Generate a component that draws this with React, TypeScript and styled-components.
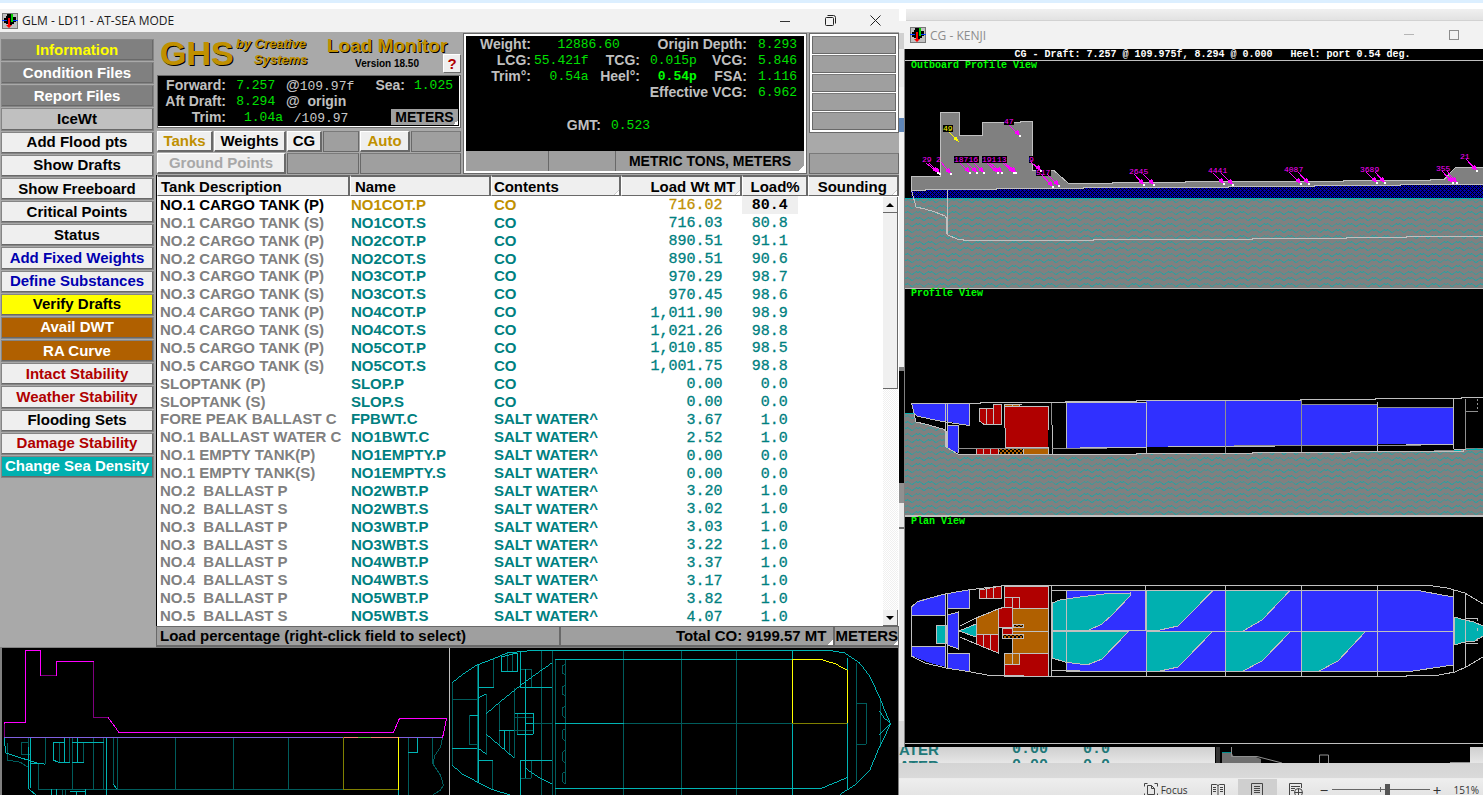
import React from "react";
import styled, { createGlobalStyle, css } from "styled-components";

const GlobalStyle = createGlobalStyle`
  *, *::before, *::after { box-sizing: border-box; }
  html, body { margin: 0; padding: 0; height: 100%; overflow: hidden; background: #fff; }
  #root { height: 100%; }
  button { font: inherit; margin: 0; padding: 0; border: 0; border-radius: 0; color: inherit; cursor: pointer; }
`;

const sans = `"Liberation Sans", Arial, sans-serif`;
const mono = `"Liberation Mono", "Courier New", monospace`;
const system = `"Open Sans", "Noto Sans", sans-serif`;

const face = "#a9a9a9";
const well = "#9f9f9f";
const dark = "#696969";
const light = "#efefef";
const gold = "#c09000";
const teal = "#008080";

/* ---------- page frame ---------- */

const Desktop = styled.div`
  height: 100vh;
  display: flex;
  flex-direction: column;
  overflow: hidden;
  border-top: 3px solid #dcefff;
  padding-top: 6px;
  background: #fff;
`;

const Windows = styled.main`
  flex: 1;
  min-height: 0;
  display: flex;
`;

const LoadWindow = styled.section`
  flex: 899 1 0;
  min-width: 0;
  display: flex;
  flex-direction: column;
  background: ${face};
  font: bold 15px ${sans};
  color: #000;
`;

const TitleBar = styled.header<{ $idle?: boolean }>`
  flex: none;
  display: flex;
  align-items: center;
  gap: 4px;
  height: ${(p) => (p.$idle ? 28 : 23)}px;
  padding: 0 ${(p) => (p.$idle ? 23 : 18)}px 0 ${(p) => (p.$idle ? 6 : 2)}px;
  background: #f2f2f2;
  color: ${(p) => (p.$idle ? "#8c8c8c" : "#1c1c1c")};
  font: 12px ${system};
  & > svg { flex: none; }
`;

const Title = styled.h1`
  margin: 0;
  font: inherit;
  white-space: nowrap;
  flex: 1;
`;

const Caption = styled.div<{ $gap: number }>`
  display: flex;
  gap: ${(p) => p.$gap}px;
`;

const CaptionButton = styled.button`
  display: flex;
  align-items: center;
  justify-content: center;
  width: 12px;
  height: 12px;
  background: none;
`;

/* ---------- load monitor ---------- */

const Upper = styled.div`
  flex: none;
  display: flex;
  height: 615px;
`;

const Sidebar = styled.nav`
  flex: none;
  width: 156px;
  padding: 7px 2px 0 1px;
`;

const SideList = styled.div`
  display: grid;
  grid-auto-rows: 1fr;
  height: 440px;
`;

const SideButton = styled.button<{ $bg: string; $fg: string }>`
  margin-bottom: 1px;
  background: ${(p) => p.$bg};
  color: ${(p) => p.$fg};
  border: 1px solid ${light};
  border-right: 2px solid ${dark};
  border-bottom: 2px solid ${dark};
  outline: 1px solid #858585;
  outline-offset: -1px;
  line-height: 18px;
  white-space: nowrap;
`;

const Content = styled.div`
  flex: 1;
  min-width: 0;
  display: flex;
  flex-direction: column;
`;

const Top = styled.div`
  flex: none;
  display: grid;
  grid-template-columns: minmax(0, 304fr) minmax(0, 344fr) minmax(0, 90fr);
  gap: 2px;
  height: 143px;
  padding: 1px 0 1px 1px;
`;

const Brand = styled.div`
  display: flex;
  flex-direction: column;
`;

const LogoRow = styled.div`
  display: flex;
  height: 42px;
  padding-left: 3px;
  color: ${gold};
  text-shadow: 1px 1px 0 #000;
`;

const Logo = styled.div`
  font-size: 34px;
  line-height: 40px;
  width: 76px;
`;

const Byline = styled.div`
  width: 91px;
  padding-top: 3px;
  font-size: 13px;
  line-height: 16px;
  font-style: italic;
  & span { display: block; padding-left: 18px; }
`;

const Product = styled.div`
  flex: 1;
  font-size: 19px;
  line-height: 26px;
  white-space: nowrap;
`;

const VersionRow = styled.div`
  display: flex;
  justify-content: flex-end;
  align-items: flex-start;
  gap: 24px;
  height: 18px;
  margin-top: -5px;
  font-size: 10px;
  line-height: 20px;
  color: #000;
  text-shadow: none;
`;

const HelpButton = styled.button`
  width: 18px;
  height: 19px;
  background: ${light};
  border: 1px solid #fff;
  border-right-color: ${dark};
  border-bottom-color: ${dark};
  color: #b00000;
  font-size: 15px;
  line-height: 16px;
`;

const DraftPanel = styled.div`
  display: grid;
  grid-template-columns: 68px 57px 90px 1fr 53px;
  grid-auto-rows: 16px;
  height: 53px;
  padding: 1px 2px 0 0;
  background: #000;
  border: 1px solid ${dark};
  box-shadow: inset -1px -1px 0 #fff;
  font-size: 14px;
  line-height: 16px;
  color: #c0c0c0;
  white-space: pre;
`;

const Label = styled.span<{ $span?: number; $left?: boolean }>`
  text-align: ${(p) => (p.$left ? "left" : "right")};
  padding-left: ${(p) => (p.$left ? 3 : 0)}px;
  ${(p) => p.$span && css`grid-column: span ${p.$span};`}
`;

const Reading = styled.span<{ $bright?: boolean; $pad?: number; $span?: number; $right?: boolean; $inset?: number }>`
  font: ${(p) => (p.$bright ? "bold" : "normal")} 13px/17px ${mono};
  color: ${(p) => (p.$bright ? "#00ff00" : "#00e000")};
  padding-left: ${(p) => p.$pad || 0}px;
  padding-right: ${(p) => p.$inset || 0}px;
  text-align: ${(p) => (p.$right ? "right" : "left")};
  ${(p) => p.$span && css`grid-column: span ${p.$span};`}
`;

const Quiet = styled.span`
  font: normal 13px/16px ${mono};
  color: #c8c8c8;
`;

const cornerTick = css`
  background-image: linear-gradient(135deg, transparent 50%, #fff 50%);
  background-size: 5px 5px;
  background-position: right bottom;
  background-repeat: no-repeat;
`;

const UnitButton = styled.button`
  grid-column: span 2;
  justify-self: end;
  width: 67px;
  height: 16px;
  background-color: ${well};
  ${cornerTick}
  color: #000;
  text-align: center;
`;

const TabGrid = styled.div`
  display: grid;
  grid-template-columns: 56fr 72fr 35fr 36fr 50fr 50fr;
  grid-template-rows: 21px 21px;
  gap: 1px;
  padding-top: 3px;
`;

const Tab = styled.button<{ $tone?: string; $span?: number }>`
  background: ${light};
  border: 1px solid #fff;
  border-right: 2px solid ${dark};
  border-bottom: 2px solid ${dark};
  color: ${(p) => p.$tone || "#000"};
  line-height: 18px;
  ${(p) => p.$span && css`grid-column: span ${p.$span};`}
  &:disabled { color: #a8a8a8; }
`;

const Blank = styled.div<{ $span?: number }>`
  background: ${well};
  border: 1px solid ${dark};
  border-top-color: #7a7a7a;
  ${(p) => p.$span && css`grid-column: span ${p.$span};`}
`;

const Summary = styled.div`
  display: flex;
  flex-direction: column;
  border: 1px solid ${dark};
  box-shadow: inset 0 0 0 2px #fff;
  padding: 2px;
  font-size: 14px;
`;

const SummaryScreen = styled.div`
  flex: 1;
  background: #000;
  color: #c0c0c0;
  white-space: pre;
`;

const SummaryGrid = styled.div`
  display: grid;
  grid-template-columns: 65px 57px 52px 57px 50px 1fr;
  grid-auto-rows: 16px;
  line-height: 16px;
`;

const GmtRow = styled.div`
  display: grid;
  grid-template-columns: 135px 1fr;
  margin-top: 17px;
  line-height: 16px;
`;

const SummaryFoot = styled.div`
  display: grid;
  grid-template-columns: 83fr 68fr 189fr;
  height: 20px;
  background: ${well};
  & > div { border-right: 1px solid ${dark}; }
`;

const SummaryUnits = styled.button`
  background-color: ${well};
  ${cornerTick}
  line-height: 20px;
`;

const SlotColumn = styled.div`
  display: flex;
  flex-direction: column;
  justify-content: space-between;
`;

const Slots = styled.div`
  display: grid;
  grid-template-rows: repeat(5, 18px);
  gap: 1px;
  padding: 2px;
  background: #fff;
  border: 1px solid ${dark};
`;

const LowerSlot = styled(Blank)`
  height: 21px;
`;

const Grid = styled.div`
  position: relative;
  flex: 1;
  min-height: 0;
  background: #fff;
  border-left: 1px solid #000;
`;

const TankTable = styled.table`
  width: 100%;
  height: 450px;
  table-layout: fixed;
  border-collapse: separate;
  border-spacing: 0;
  white-space: pre;
`;

const Head = styled.th<{ $right?: boolean; $pad?: number; $tick?: boolean }>`
  height: 21px;
  padding: 0 ${(p) => (p.$right ? p.$pad : 0)}px 0 ${(p) => (p.$right ? 0 : p.$pad)}px;
  text-align: ${(p) => (p.$right ? "right" : "left")};
  background-color: ${light};
  border: 1px solid #fff;
  border-top: 2px solid ${dark};
  border-right: 2px solid ${dark};
  border-bottom: 1px solid ${dark};
  font-weight: bold;
  line-height: 17px;
  ${(p) => p.$tick && css`
    background-image: linear-gradient(135deg, transparent 45%, #b0b0b0 45%, #fff 60%);
    background-size: 5px 5px;
    background-position: right bottom;
    background-repeat: no-repeat;
  `}
`;

const Cell = styled.td<{ $tone?: string; $pad?: number }>`
  padding: 0 0 0 ${(p) => p.$pad || 0}px;
  color: ${(p) => p.$tone || teal};
  line-height: 16px;
`;

const NumberCell = styled.td<{ $tone?: string; $strong?: boolean }>`
  padding: 2px 20px 0 0;
  text-align: right;
  font: ${(p) => (p.$strong ? "bold" : "normal")} 15px/15px ${mono};
  color: ${(p) => p.$tone || teal};
  -webkit-text-stroke: ${(p) => (p.$strong ? "0" : "0.3px")};
  ${(p) => p.$strong && css`
    background: linear-gradient(${light}, ${light}) 0 0 / 56px 100% no-repeat;
  `}
`;

const ScrollBar = styled.div`
  position: absolute;
  top: 22px;
  right: 1px;
  bottom: 0;
  width: 15px;
  display: flex;
  flex-direction: column;
  background: repeating-conic-gradient(#fff 0 25%, #f0f0f0 0 50%) 0 0 / 2px 2px;
`;

const Arrow = styled.button<{ $down?: boolean }>`
  flex: none;
  height: 16px;
  display: flex;
  align-items: center;
  justify-content: center;
  background: #f0f0f0;
  border-bottom: 1px solid ${dark};
  border-right: 1px solid ${dark};
  &::before {
    content: "";
    border: 4px solid transparent;
    border-top-width: 0;
    border-bottom-color: #000;
    ${(p) => p.$down && css`transform: rotate(180deg);`}
  }
`;

const Thumb = styled.div`
  height: 176px;
  background: #f0f0f0;
  border-bottom: 1px solid ${dark};
  border-right: 1px solid ${dark};
`;

const Spring = styled.div`
  flex: 1;
`;

const StatusBar = styled.footer`
  flex: none;
  display: grid;
  grid-template-columns: 405fr 273fr 63fr;
  height: 21px;
  background: ${well};
  border: 1px solid ${dark};
  border-bottom-width: 2px;
  line-height: 18px;
  white-space: nowrap;
`;

const StatusText = styled.div`
  padding-left: 3px;
  border-right: 2px solid ${dark};
`;

const StatusButton = styled.button<{ $pad: number }>`
  background-color: ${well};
  ${cornerTick}
  text-align: right;
  padding-right: ${(p) => p.$pad}px;
  & + & { border-left: 2px solid ${dark}; }
`;

const Drawings = styled.div`
  flex: 1;
  min-height: 0;
  display: flex;
  overflow: hidden;
  background: #000;
  border: solid #808080;
  border-width: 1px 1px 0 2px;
`;

const ProfilePane = styled.div`
  flex: 447 1 0;
  border-right: 1px solid #c0c0c0;
`;

const PlanPane = styled.div`
  flex: 449 1 0;
`;

const Drawing = styled.svg`
  display: block;
  width: 100%;
  height: auto;
`;

/* ---------- right side ---------- */

const Behind = styled.section`
  flex: 584 1 0;
  min-width: 0;
  display: flex;
  flex-direction: column;
`;

const BehindTop = styled.div`
  height: 12px;
  margin-left: 7px;
  border-bottom: 1px solid #d2d2d2;
  background: linear-gradient(#f0f0f0, #e2e2e2);
`;

const BehindMiddle = styled.div`
  height: 726px;
  flex: none;
  display: flex;
`;

const Gutter = styled.div`
  flex: none;
  width: 5px;
  overflow: hidden;
  background: linear-gradient(
    #f2f2f2 0 12px, #d0d0d0 12px 28px, #ebebeb 28px 66px, #f2f2f2 66px 97px,
    #5f86b8 97px 111px, #f2f2f2 111px 346px,
    #808080 346px 350px, #000 350px 462px, #909090 462px 482px, #e8e8e8 482px 506px,
    #707070 506px 508px, #ededed 508px 700px, #d8d8d8 700px
  );
`;

const CgWindow = styled.div`
  flex: 1;
  min-width: 0;
  display: flex;
  flex-direction: column;
  background: #000;
`;

const Screen = styled.div`
  flex: 1;
  min-height: 0;
  display: flex;
  flex-direction: column;
  border-left: 1px solid #808080;
  overflow: hidden;
`;

const ScreenHead = styled.div`
  flex: none;
  height: 12px;
  border-bottom: 1px solid #c0c0c0;
  padding-left: 37px;
  color: #fff;
  font: bold 10px/11px ${mono};
  text-align: center;
  white-space: pre;
`;

const View = styled.div<{ $rule: number }>`
  position: relative;
  flex: none;
  border-bottom: ${(p) => p.$rule}px solid #c0c0c0;
`;

const ViewName = styled.h2`
  position: absolute;
  left: 6px;
  top: 0;
  margin: 0;
  color: #00ff00;
  font: bold 10px/10px ${mono};
`;

const Remnant = styled.div`
  flex: none;
  display: flex;
  height: 16px;
  overflow: hidden;
  background: linear-gradient(#cfcfcf, #e6e6e6);
`;

const RemnantRows = styled.div`
  flex: 316 1 0;
  display: grid;
  grid-template-columns: 84px 65px 1fr;
  grid-auto-rows: 16px;
  color: #207878;
  font: bold 15px/16px ${sans};
  margin-top: -5px;
  & > span:nth-child(3n + 2), & > span:nth-child(3n) { font-family: ${mono}; text-align: right; }
  & > span:nth-child(3n) { padding-right: 105px; }
`;

const RemnantPicture = styled.div`
  flex: 268 1 0;
`;

const WordShade = styled.div`
  flex: none;
  height: 16px;
  background: linear-gradient(#d4d4d4, #dadada);
  border-bottom: 1px solid #ececec;
`;

const WordBar = styled.div`
  flex: 1;
  display: flex;
  justify-content: flex-end;
  align-items: flex-start;
  overflow: hidden;
  background: linear-gradient(#eeeeee, #e4e4e4);
  color: #333;
  font: 10px/22px ${system};
`;

const WordButton = styled.button<{ $on?: boolean }>`
  display: flex;
  align-items: center;
  justify-content: center;
  gap: 3px;
  width: 39px;
  height: 22px;
  background: ${(p) => (p.$on ? "#cfcfcf" : "none")};
`;

const FocusButton = styled(WordButton)`
  width: auto;
  margin-right: 11px;
`;

const ZoomGroup = styled.div`
  display: flex;
  align-items: center;
  gap: 3px;
  height: 22px;
  padding: 0 4px;
  & > output { padding-left: 9px; }
`;

const ZoomButton = styled.button`
  width: 9px;
  height: 14px;
  background: none;
  font: 15px/12px ${system};
`;

const ZoomRange = styled.input`
  appearance: none;
  width: 98px;
  height: 14px;
  margin: 0;
  background: linear-gradient(#666, #666) 0 6px / 100% 1px no-repeat,
    linear-gradient(#666, #666) 48px 4px / 1px 5px no-repeat;
  &::-webkit-slider-thumb {
    appearance: none;
    width: 5px;
    height: 12px;
    background: #555;
  }
`;

/* ---------- data ---------- */

const grey = "#808080";
const sideItems: [string, string, string][] = [
  ["Information", grey, "#ffff00"],
  ["Condition Files", grey, "#fff"],
  ["Report Files", grey, "#fff"],
  ["IceWt", "#c0c0c0", "#000"],
  ["Add Flood pts", light, "#000"],
  ["Show Drafts", light, "#000"],
  ["Show Freeboard", light, "#000"],
  ["Critical Points", light, "#000"],
  ["Status", light, "#000"],
  ["Add Fixed Weights", light, "#0000b0"],
  ["Define Substances", light, "#0000b0"],
  ["Verify Drafts", "#ffff00", "#000"],
  ["Avail DWT", "#b06000", "#fff"],
  ["RA Curve", "#b06000", "#fff"],
  ["Intact Stability", light, "#b00000"],
  ["Weather Stability", light, "#b00000"],
  ["Flooding Sets", light, "#000"],
  ["Damage Stability", light, "#b00000"],
  ["Change Sea Density", "#00b0b0", "#fff"],
];

const SW = "SALT WATER^";
const tanks: [string, string, string, string, string][] = [
  ["NO.1 CARGO TANK (P)", "NO1COT.P", "CO", "716.02", "80.4"],
  ["NO.1 CARGO TANK (S)", "NO1COT.S", "CO", "716.03", "80.8"],
  ["NO.2 CARGO TANK (P)", "NO2COT.P", "CO", "890.51", "91.1"],
  ["NO.2 CARGO TANK (S)", "NO2COT.S", "CO", "890.51", "90.6"],
  ["NO.3 CARGO TANK (P)", "NO3COT.P", "CO", "970.29", "98.7"],
  ["NO.3 CARGO TANK (S)", "NO3COT.S", "CO", "970.45", "98.6"],
  ["NO.4 CARGO TANK (P)", "NO4COT.P", "CO", "1,011.90", "98.9"],
  ["NO.4 CARGO TANK (S)", "NO4COT.S", "CO", "1,021.26", "98.8"],
  ["NO.5 CARGO TANK (P)", "NO5COT.P", "CO", "1,010.85", "98.5"],
  ["NO.5 CARGO TANK (S)", "NO5COT.S", "CO", "1,001.75", "98.8"],
  ["SLOPTANK (P)", "SLOP.P", "CO", "0.00", "0.0"],
  ["SLOPTANK (S)", "SLOP.S", "CO", "0.00", "0.0"],
  ["FORE PEAK BALLAST C", "FPBWT.C", SW, "3.67", "1.0"],
  ["NO.1 BALLAST WATER C", "NO1BWT.C", SW, "2.52", "1.0"],
  ["NO.1 EMPTY TANK(P)", "NO1EMPTY.P", SW, "0.00", "0.0"],
  ["NO.1 EMPTY TANK(S)", "NO1EMPTY.S", SW, "0.00", "0.0"],
  ["NO.2  BALLAST P", "NO2WBT.P", SW, "3.20", "1.0"],
  ["NO.2  BALLAST S", "NO2WBT.S", SW, "3.02", "1.0"],
  ["NO.3  BALLAST P", "NO3WBT.P", SW, "3.03", "1.0"],
  ["NO.3  BALLAST S", "NO3WBT.S", SW, "3.22", "1.0"],
  ["NO.4  BALLAST P", "NO4WBT.P", SW, "3.37", "1.0"],
  ["NO.4  BALLAST S", "NO4WBT.S", SW, "3.17", "1.0"],
  ["NO.5  BALLAST P", "NO5WBT.P", SW, "3.82", "1.0"],
  ["NO.5  BALLAST S", "NO5WBT.S", SW, "4.07", "1.0"],
];

/* flood point arrows: start x, start y, end x, end y */
const arrows: number[][] = [
  [1009, 125, 1019, 135], [929, 163, 939, 173], [926, 163, 937, 172], [941, 162, 950, 173],
  [960, 163, 969, 172], [967, 163, 976, 172], [974, 163, 983, 172],
  [987, 163, 997, 172], [990, 163, 1001, 172], [1003, 163, 1013, 172], [1005, 163, 1015, 172],
  [1031, 162, 1040, 170], [1041, 174, 1052, 186], [1047, 174, 1058, 185],
  [1134, 174, 1143, 184], [1143, 174, 1153, 184], [1213, 173, 1223, 183], [1221, 173, 1232, 184],
  [1289, 172, 1300, 183], [1298, 172, 1308, 183], [1366, 172, 1376, 182], [1375, 172, 1384, 182],
  [1442, 171, 1452, 182], [1447, 171, 1456, 182], [1466, 159, 1476, 170],
];

/* flood point captions; the last field marks those that sit on a dark plate */
const floodLabels: [string, number, number, boolean][] = [
  ["47", 1004, 124, true], ["29", 922, 162, false], ["2", 936, 162, false],
  ["18716", 954, 162, true], ["191", 982, 162, true], ["13", 997, 162, true],
  ["9", 1029, 162, true], ["517", 1036, 175, true],
  ["2645", 1129, 174, false], ["4441", 1208, 173, false], ["4087", 1284, 172, false],
  ["3689", 1360, 172, false], ["355", 1436, 171, false], ["21", 1460, 159, false],
];

/* ---------- drawings ---------- */

const ShipIcon = () => (
  <svg width="16" height="16" viewBox="0 0 16 16" aria-hidden="true">
    <path d="M0 0h16v16H0z" fill="#777" />
    <path d="M1 1h14v14H1z" fill="#c0c0c0" />
    <path d="M5 1h4v2h2v1h3v5h-2v2h-2v1H6v-1H4v-1H2V5h2V3h1z" fill="#000" />
    <path d="M9 1h2v8H9z" fill="#00d000" />
    <path d="M0 7.500h5M11 7.500h5" stroke="#0040ff" />
    <path d="M6 5h2v7h2l-3 3-3-3h2z" fill="#ff0000" />
  </svg>
);

/* one 12 x 3 swell, drawn as a broad crest and a narrow trough */
const wave = "l2 -1 2 -2 2 1 2 -1 2 2 2 1";
const longRun = wave + wave;

const Patterns = ({ id }: { id: string }) => (
  <defs>
    <pattern id={`${id}-sea`} width="48" height="24" patternUnits="userSpaceOnUse">
      <path d="M0 0h48v24H0z" fill="#808080" />
      <g fill="none" stroke="#00b0b0" shapeRendering="auto">
        <path d={`M0 4.500${longRun}M0 10.500${longRun}M24 16.500${longRun}M24 22.500${longRun}`} opacity=".85" />
        <path d={`M24 4.500${longRun}M24 10.500${longRun}M0 16.500${longRun}M0 22.500${longRun}`} opacity=".6" />
      </g>
    </pattern>
    <pattern id={`${id}-navy`} width="4" height="4" patternUnits="userSpaceOnUse">
      <path d="M0 0h4v4H0z" fill="#0000b0" />
      <path d="M0 0h1v1H0zM2 2h1v1H2zM1 1h1v1H1zM3 3h1v1H3zM3 1h1v1H3zM1 3h1v1H1z" fill="#000" />
    </pattern>
    <pattern id={`${id}-mix`} width="4" height="4" patternUnits="userSpaceOnUse">
      <path d="M0 0h4v4H0z" fill="#000" />
      <path d="M0 0h2v2H0zM2 2h2v2H2z" fill="#b06000" />
    </pattern>
  </defs>
);

const ink = { fill: "none", stroke: "#c0c0c0" } as const;

const OutboardView = () => (
  <Drawing viewBox="905 61 578 227" shapeRendering="crispEdges" role="img" aria-label="Outboard profile">
    <Patterns id="a" />
    <rect x="905" y="198" width="578" height="90" fill="url(#a-sea)" />
    <path d="M905 198.500H1483" stroke="#00b0b0" />
    <path d="M911 198V190L996 189L1083 188L1228 187L1314 186L1400 185L1483 184V198z" fill="url(#a-navy)" />
    <path
      d="M911.500 190.500V176.500H940.500V112.500H959.500V135.500H982.500V122.500H1020V121.500H1032.500V170.500H1054L1068.500 183.500H1112V182.500H1185V181.500H1343V180.500H1430V179.500H1444L1455.500 167.500H1484V184.500H1400V185.500H1314V186.500H1228V187.500H1083V188.500H996V189.500H925V190.500z"
      fill="#808080" stroke="#c0c0c0"
    />
    <path d="M911.500 190L916 207L925 209L935 212L945 216L947 219L946 232L948 235L957 239L970 241L980 240.500H1093L1093 239.500H1252V238.500H1346V237.500H1406V236.500H1483M947.500 190V235" {...ink} />
    {floodLabels.filter((f) => f[3]).map(([t, x, y], i) => (
      <rect key={i} x={x} y={y - 6} width={t.length * 5} height="7" fill="#000" />
    ))}
    <g stroke="#ff00ff" fill="#ff00ff">
      {arrows.map(([x1, y1, x2, y2], i) => (
        <g key={i}>
          <path d={`M${x1} ${y1}L${x2 - 1} ${y2 - 1}`} fill="none" />
          <path d={`M${x2 + 1} ${y2 + 1}L${x2 - 5} ${y2 - 2}L${x2 - 1} ${y2 - 6}z`} stroke="none" />
          <path d={`M${x2} ${y2}h2v2h-2z`} fill="#fff" stroke="none" />
        </g>
      ))}
    </g>
    <g fill="#ff00ff" fontFamily="Liberation Mono, monospace" fontSize="8">
      {floodLabels.map(([t, x, y], i) => (
        <text key={i} x={x} y={y}>{t}</text>
      ))}
    </g>
    <rect x="943" y="125" width="10" height="7" fill="#000" />
    <text x="943" y="131" fill="#ffff00" fontFamily="Liberation Mono, monospace" fontSize="8">49</text>
    <path d="M949 132L958 141" stroke="#ffff00" />
    <path d="M959 142L953 139L956 136z" fill="#ffff00" />
  </Drawing>
);

const ProfileView = () => (
  <Drawing viewBox="905 289 578 226" shapeRendering="crispEdges" role="img" aria-label="Profile">
    <Patterns id="b" />
    <path
      d="M905 413H914L916 422L925 424L943 429L946 431V447L958 454L1052 455L1136 454L1252 453L1350 452L1405 451L1463 450L1466 448H1483V516H905z"
      fill="url(#b-sea)"
    />
    <path d="M905 413.500H914M1454 450.500H1461M1466 449.500H1483M966 454.500H977" stroke="#00b0b0" />
    <g fill="#3030ff">
      <path d="M912 404H969V425L950 422L930 419L917 416L914 413z" />
      <path d="M948 425H958V453L948 448z" />
      <path d="M1066 403H1146V401H1226V400H1301V404H1377V407H1453V444H1377V445H1301V446H1226V447H1146V448H1066z" />
    </g>
    <g fill="#b00000">
      <path d="M979 408H994V404H1002V424H984L979 421zM1005 407H1048V447H1005zM976 448H998V455H976z" />
    </g>
    <path d="M1005 404H1020V406H1005zM1024 448H1048V455H1024z" fill="#b06000" />
    <rect x="998" y="448" width="26" height="7" fill="url(#b-mix)" />
    <g {...ink}>
      <path d="M911.500 403.500H980V402.500H1065V401.500H1136V400.500H1300V399.500H1375V398.500H1461V397.500H1483" />
      <path d="M911.500 403L914 413L916 422L925 424L943 429L946 431V447L958 454H1052.500V454.500H1136V453.500H1252V452.500H1350V451.500H1405V451H1463V449.500H1466" />
      <path d="M914 413L917 416L930 419L945 422L969 425.500V404M945.500 403V447M947.500 403V448M948 425.500H958.500V453" />
      <path d="M979.500 421V408H993V404.500H1001.500V424.500H984zM986.500 408V424M993.500 408V424M1004.500 404V428M1005.500 428V447M1005 406.500H1048V430M1005 447.500H1048.500V455M1004 404.500H1022M1012.500 404V406M1019.500 404V406" />
      <path d="M976.500 448V455M983.500 448V455M990.500 448V455M998.500 448V455M1023.500 448V455M1052.500 425V455M1066.500 402V448" />
      <path d="M1066 402.500H1146V425L1146.500 454M1080 447.500H1146M1168 446.500H1190V446.500H1275M1406 444.500H1453M1454 449.500H1465M1377.500 402V452M1453.500 399V449" />
    </g>
    <g fill="none" stroke="#909090">
      <path d="M958 448.500H1048M1051.500 403V425M1052 448.500H1107M1225.500 401V453M1301.500 400V452M1465.500 399V449M1466 411.500H1478" />
      <path d="M1301 404.500H1377M1377 407.500H1453M1234 445.500H1421" />
      <path d="M1477.500 399V411" strokeDasharray="2 2" />
    </g>
  </Drawing>
);

const PlanView = () => (
  <Drawing viewBox="905 517 578 226" shapeRendering="crispEdges" role="img" aria-label="Plan">
    <Patterns id="c" />
    <g fill="#3030ff">
      <path d="M912 606L920 600L945 594V615H912zM948 593L969 590V608H948zM912 647H946V667L930 663L912 656zM948 653H969V672L948 668zM947 615L958 612V649L947 645z" />
      <path d="M1066 591H1418L1453 597V665L1410 671H1066z" />
    </g>
    <g fill="#00b0b0" stroke="#c0c0c0">
      <path d="M936.500 625.500H946V643.500H936.500z" />
      <path d="M959 631L976 624V637z" />
      <path d="M1052 603L1060 600L1080 597L1104 594L1130 593V596L1112 615L1102 624L1089 630H1052z" />
      <path d="M1052 631H1129L1102 659L1087 665L1065 662L1052 658z" />
      <path d="M1146 590.500H1213L1186 618L1178 626L1160 630H1146zM1146 631H1213L1186 659L1178 667L1160 671H1146z" />
      <path d="M1225 590.500H1290L1262 620L1243 631H1225zM1225 631H1291L1262 661L1243 671H1225z" />
      <path d="M1301 631H1366L1338 661L1319 671H1301z" />
      <path d="M1454 617L1465 620L1474 622L1483 626V636L1475 641L1465 642L1454 645z" />
    </g>
    <g fill="#b00000" stroke="#c0c0c0">
      <path d="M979.500 590L1001.500 586V598.500H979.500zM1004.500 586H1048.500V608.500H1004.500zM976.500 634.500H998V653L976.500 644z" />
      <path d="M998 609L1005 607H1012.500V627.500H998zM1002 628H1012V635H1002zM1004.500 653.500H1048.500V676H1004.500z" />
    </g>
    <g fill="#b06000" stroke="#c0c0c0">
      <path d="M976.500 618L998 609V634.500H976.500zM1012.500 608.500H1048.500V653.500H1012.500zM1004.500 653.500H1019.500V664.500H1004.500z" />
    </g>
    <path d="M1013 624H1023V627H1013zM1002 634H1023V638H1002z" fill="url(#c-mix)" stroke="#c0c0c0" />
    <g {...ink}>
      <path d="M1483 604L1465 593L1447 588L1430 585.500H1010L1001 586L968 590L945 594L930 598L917 602L911.500 607V656L925 663L946 668L965 671L990 675.500H1023V676.500H1406V675.500H1436L1455 672L1466 667L1483 657" />
      <path d="M912 615.500H946M912 646.500H946M948 608.500H970M948 653.500H969.500V672M969.500 590V608M945.500 594V668M947.500 593V668M947 615L958.500 612V649L947 645" />
      <path d="M960 626L976 618L998 609M960 637L976 644" />
      <path d="M1004.500 597.500H1019.500V608M1012.500 597V608M1012.500 653V664M986.500 589V598M993.500 587V598M983.500 634V648M990.500 634V650" />
      <path d="M1052 590.500H1418L1453 597M1066 671.500H1410L1453 665M1052 670.500H1080M1066.500 590V671M1012 631.500H1049M1052 630.500H1146M1146 631.500H1453" />
      <path d="M1048.500 586V676M1051.500 586V676M1145.500 586V631M1146.500 631V676M1225.500 586V676M1301.500 586V676M1377.500 586V676M1453.500 589V672M1465.500 594V667M1466 618.500H1478M1466 643.500H1478" />
      <path d="M1477.500 618V643" strokeDasharray="3 7" />
    </g>
  </Drawing>
);

const dim = { fill: "none", stroke: "#005c5c" } as const;
const lit = { fill: "none", stroke: "#00b4b4" } as const;

const SmallProfile = () => (
  <Drawing viewBox="2 648 446 147" shapeRendering="crispEdges" role="img" aria-label="Tank profile">
    <path d="M4.500 738V722.500H25.500V650.500H40.500V675.500H56.500V661.500H93.500V717.500H108L119 732.500H393L399 718.500H446L442 738" fill="none" stroke="#ff00ff" />
    <path d="M93.500 662V717.500H108M41 675.500H56M4.500 738V724" fill="none" stroke="#800080" />
    <g {...dim}>
      <path d="M38 789.500H344M175.500 738V789M233.500 738V789M288.500 738V789M72.500 738V789M93.500 738V789M103.500 738V789M113.500 738V784M117.500 738V789M38.500 763V789M45.500 738V764" />
      <path d="M28 742H21.500V754.500H30M59.500 742V762M69.500 738V762M83.500 742V762M28.500 738V747M408.500 738V795M432.500 738V764M62.500 789V795M65.500 789V795" />
      <path d="M7 743V760L20 762L28 767M442 738L440 747L434 756L432.500 764L440 775L443 785L440 790L432 795" />
    </g>
    <g {...lit}>
      <path d="M4 738L6 753L28 760L39 763.500L45 764M30.500 738V788M28 747V788L36 795M64.500 738V762.500M77.500 738V762M72 742.500H104M53.500 742V760L59 762.500H70M53 742.500H64M72 762.500H84M106.500 738V795M30 763H39" />
      <path d="M113 784L117 789M51.500 789V795M56.500 789V795M70 791.500H86M85.500 789V795M76.500 791V795M408 752.500H417.500V738M398.500 789V795" />
    </g>
    <path d="M4 737.500H442" stroke="#8060e0" />
    <path d="M343.500 737V789.500H398" fill="none" stroke="#808000" />
    <path d="M344 737.500H398" stroke="#ff8080" />
    <path d="M358 737.500H371" stroke="#60c040" />
    <path d="M398.500 737V790" stroke="#ffff00" />
  </Drawing>
);

const SmallPlan = () => (
  <Drawing viewBox="450 648 449 147" shapeRendering="crispEdges" role="img" aria-label="Tank plan">
    <g {...dim}>
      <path d="M452.500 682V765M452 699.500H477M477.500 664V782M493.500 658V687M493 760.500V790M507.500 653V671M512.500 653V671M541.500 651V795M552.500 651V795M555.500 659V795M565.500 659V784" />
      <path d="M623.500 651V795M681.500 651V795M736.500 651V795M624 723.500H792M525 723.500H552M520 669.500H531.500V687M520 778.500H531.500V760M486.500 694V755M499.500 704V745M514.500 688V758M469.500 715V744.500H479" />
      <path d="M856.500 663V782M857 703.500H866.500V744.500H857M880.500 700V747M515 717.500H533M515 730.500H533M504.500 731V749M509.500 731V754M517.500 714V735" />
      <path d="M565 664L562.500 666V673L565 675M565 685L562.500 687V694L565 696M565 706L562.500 708V715L565 718M565 729L562.500 731V739L565 741M565 750L562.500 753V760L565 763M565 772L562.500 774V782L565 784" />
    </g>
    <g {...lit}>
      <path d="M452 683L462 675L477 665L493 659L507 653L532 650.500H830L845 653L860 663L870 676L880 697L885 710L891 724L885 737L880 747L870 771L857 784L840 795" />
      <path d="M452 765L462 774L477 782L493 790L510 795M452 748.500H477M478.500 665V783M478 687.500H494M478 760.500H493M478 698L486 694M478 748L486 754" />
      <path d="M501.500 656V671.500H518V653M520.500 652V687.500H552M525.500 669V778M520.500 795V760.500H552M501 657L517 653" />
      <path d="M486 714L500 702L525 682L552 663M486 734L500 746L514 758M525 768L538 777L552 784M515 713.500H533.500V734.500H517M499 730.500H514M525 723.500H533M504.500 731V750" />
      <path d="M470 715.500H478M555 659.500H792M555 723.500H624M555 788.500H822L847 778M792.500 651V659M792.500 723V795M847.500 658V670M847.500 723V790" />
      <path d="M880 711L886 720L891 724L880 735" />
    </g>
    <path d="M792.500 723.500H847" stroke="#808000" />
    <path d="M792.500 723V659.500H822L836 664L847.500 670V723" fill="none" stroke="#ffff00" />
  </Drawing>
);

/* ---------- assembly ---------- */

const LoadMonitor = () => (
  <LoadWindow>
    <TitleBar>
      <ShipIcon />
      <Title>GLM - LD11 - AT-SEA MODE</Title>
      <Caption $gap={33}>
        <CaptionButton aria-label="Minimize">
          <svg width="10" height="10" viewBox="0 0 10 10"><path d="M0 5.500h10" stroke="#333" /></svg>
        </CaptionButton>
        <CaptionButton aria-label="Restore">
          <svg width="11" height="11" viewBox="0 0 11 11" fill="none" stroke="#222">
            <rect x=".5" y="2.500" width="8" height="8" rx="1" />
            <path d="M2.500 .5h6a2 2 0 0 1 2 2v6" />
          </svg>
        </CaptionButton>
        <CaptionButton aria-label="Close">
          <svg width="11" height="11" viewBox="0 0 11 11"><path d="M.5 .5l10 10M10.500 .5l-10 10" stroke="#222" /></svg>
        </CaptionButton>
      </Caption>
    </TitleBar>
    <Upper>
      <Sidebar>
        <SideList>
          {sideItems.map(([t, bg, fg]) => (
            <SideButton key={t} $bg={bg} $fg={fg}>{t}</SideButton>
          ))}
        </SideList>
      </Sidebar>
      <Content>
        <Top>
          <Brand>
            <LogoRow>
              <Logo>GHS</Logo>
              <Byline>by Creative<span>Systems</span></Byline>
              <Product>
                Load Monitor
                <VersionRow>
                  Version 18.50
                  <HelpButton>?</HelpButton>
                </VersionRow>
              </Product>
            </LogoRow>
            <DraftPanel>
              <Label>Forward:</Label>
              <Reading $right>{"7.257 "}</Reading>
              <Label $left>@<Quiet>109.97f</Quiet></Label>
              <Label>Sea:</Label>
              <Reading $right $inset={5}>1.025</Reading>
              <Label>Aft Draft:</Label>
              <Reading $right>{"8.294 "}</Reading>
              <Label $left $span={3}>{"@  origin"}</Label>
              <Label>Trim:</Label>
              <Reading $right>1.04a</Reading>
              <Label $left><Quiet>{" /109.97"}</Quiet></Label>
              <UnitButton>METERS</UnitButton>
            </DraftPanel>
            <TabGrid>
              <Tab $tone={gold}>Tanks</Tab>
              <Tab>Weights</Tab>
              <Tab>CG</Tab>
              <Blank />
              <Tab $tone={gold}>Auto</Tab>
              <Blank />
              <Tab $span={2} disabled>Ground Points</Tab>
              <Blank $span={2} />
              <Blank $span={2} />
            </TabGrid>
          </Brand>
          <Summary>
            <SummaryScreen>
              <SummaryGrid>
                <Label>Weight:</Label>
                <Reading $pad={3} $span={2}>{"   12886.60"}</Reading>
                <Label $span={2}>Origin Depth:</Label>
                <Reading $pad={11}>8.293</Reading>
                <Label>LCG:</Label>
                <Reading $pad={3}>55.421f</Reading>
                <Label>TCG:</Label>
                <Reading $pad={10}>0.015p</Reading>
                <Label>VCG:</Label>
                <Reading $pad={11}>5.846</Reading>
                <Label>Trim°:</Label>
                <Reading $pad={3}>{"  0.54a"}</Reading>
                <Label>Heel°:</Label>
                <Reading $pad={10} $bright>{" 0.54p"}</Reading>
                <Label>FSA:</Label>
                <Reading $pad={11}>1.116</Reading>
                <Label $span={5}>Effective VCG:</Label>
                <Reading $pad={11}>6.962</Reading>
              </SummaryGrid>
              <GmtRow>
                <Label>GMT:</Label>
                <Reading $pad={10}>0.523</Reading>
              </GmtRow>
            </SummaryScreen>
            <SummaryFoot>
              <div /><div />
              <SummaryUnits>METRIC TONS, METERS</SummaryUnits>
            </SummaryFoot>
          </Summary>
          <SlotColumn>
            <Slots><Blank /><Blank /><Blank /><Blank /><Blank /></Slots>
            <LowerSlot />
          </SlotColumn>
        </Top>
        <Grid>
          <TankTable>
            <colgroup>
              <col style={{ width: "26%" }} />
              <col style={{ width: "19%" }} />
              <col style={{ width: "17.600%" }} />
              <col style={{ width: "16.300%" }} />
              <col style={{ width: "8.800%" }} />
              <col />
            </colgroup>
            <thead>
              <tr>
                <Head $pad={3}>Tank Description</Head>
                <Head $pad={4}>Name</Head>
                <Head $pad={2} $tick>Contents</Head>
                <Head $pad={5} $right $tick>Load Wt MT</Head>
                <Head $pad={6} $right>Load%</Head>
                <Head $pad={9} $tick>Sounding</Head>
              </tr>
            </thead>
            <tbody>
              {tanks.map(([desc, name, contents, load, pct], i) => (
                <tr key={name}>
                  <Cell $pad={3} $tone={i ? grey : "#000"}>{desc}</Cell>
                  <Cell $pad={1} $tone={i ? teal : gold}>{name}</Cell>
                  <Cell $pad={3} $tone={i ? teal : gold}>{contents}</Cell>
                  <NumberCell $tone={i ? teal : gold}>{load}</NumberCell>
                  <NumberCell $tone={i ? teal : "#000"} $strong={!i}>{pct}</NumberCell>
                  <td />
                </tr>
              ))}
            </tbody>
          </TankTable>
          <ScrollBar>
            <Arrow aria-label="Scroll up" />
            <Thumb />
            <Spring />
            <Arrow $down aria-label="Scroll down" />
          </ScrollBar>
        </Grid>
        <StatusBar>
          <StatusText>Load percentage (right-click field to select)</StatusText>
          <StatusButton $pad={7}>Total CO: 9199.57 MT</StatusButton>
          <StatusButton $pad={0}>METERS</StatusButton>
        </StatusBar>
      </Content>
    </Upper>
    <Drawings>
      <ProfilePane><SmallProfile /></ProfilePane>
      <PlanPane><SmallPlan /></PlanPane>
    </Drawings>
  </LoadWindow>
);

const RightSide = () => (
  <Behind>
    <BehindTop />
    <BehindMiddle>
      <Gutter />
      <CgWindow>
        <TitleBar $idle>
          <ShipIcon />
          <Title>CG - KENJI</Title>
          <Caption $gap={33}>
            <CaptionButton aria-label="Minimize">
              <svg width="10" height="10" viewBox="0 0 10 10"><path d="M0 4.500h10" stroke="#b5b5b5" /></svg>
            </CaptionButton>
            <CaptionButton aria-label="Maximize">
              <svg width="10" height="10" viewBox="0 0 10 10"><rect x=".5" y=".5" width="9" height="9" fill="none" stroke="#8c8c8c" /></svg>
            </CaptionButton>
          </Caption>
        </TitleBar>
        <Screen>
          <ScreenHead>{"CG - Draft: 7.257 @ 109.975f, 8.294 @ 0.000   Heel: port 0.54 deg."}</ScreenHead>
          <View $rule={1}><ViewName>Outboard Profile View</ViewName><OutboardView /></View>
          <View $rule={2}><ViewName>Profile View</ViewName><ProfileView /></View>
          <View $rule={1}><ViewName>Plan View</ViewName><PlanView /></View>
        </Screen>
      </CgWindow>
    </BehindMiddle>
    <Remnant>
      <RemnantRows>
        <span>ATER</span><span>0.00</span><span>0.0</span>
        <span>ATER</span><span>0.00</span><span>0.0</span>
      </RemnantRows>
      <RemnantPicture>
        <Drawing viewBox="1215 747 268 16" role="img" aria-label="Hidden drawing">
          <path d="M1215 747H1470V763H1215z" fill="#000" />
          <path d="M1216 747h4v16h-4z" fill="#333" />
          <path d="M1222 752h9l3 5h22l5 2v4h-39z" fill="#707070" />
          <path d="M1222 752.500h9" stroke="#009090" />
          <path d="M1231.500 747v9.500H1257L1282 763M1319.500 763v-8h9v8M1450 762.500h20" fill="none" stroke="#909090" />
        </Drawing>
      </RemnantPicture>
    </Remnant>
    <WordShade />
    <WordBar>
      <FocusButton>
        <svg width="14" height="14" viewBox="0 0 14 14" fill="none" stroke="#444">
          <path d="M.5 3.500v-3h3M10.500 .5h3v3M.5 10.500v3h3M13.500 10.500v3h-3" />
          <path d="M3.500 2.500h4l3 3v6h-7zM7.500 2.500v3h3" />
        </svg>
        Focus
      </FocusButton>
      <WordButton aria-label="Read mode">
        <svg width="14" height="14" viewBox="0 0 14 14" fill="none" stroke="#444">
          <path d="M.5 1.500h5l1.500 1 1.500-1h5v11h-5l-1.500 1-1.500-1h-5zM7 2v11M2 4.500h3M2 6.500h3M2 8.500h3M9 4.500h3M9 6.500h3M9 8.500h3" />
        </svg>
      </WordButton>
      <WordButton $on aria-label="Print layout">
        <svg width="12" height="14" viewBox="0 0 12 14" fill="none" stroke="#444">
          <path d="M.5 .5h11v13H.5zM3 3.500h6M3 5.500h6M3 7.500h6M3 9.500h6" />
        </svg>
      </WordButton>
      <WordButton aria-label="Web layout">
        <svg width="14" height="14" viewBox="0 0 14 14" fill="none" stroke="#444">
          <path d="M5 12.500H.5V.5h12V5M2 3.500h9M2 5.500h4M2 7.500h3" />
          <circle cx="9.500" cy="9.500" r="4" />
          <path d="M5.500 9.500h8M9.500 5.500v8" />
        </svg>
      </WordButton>
      <ZoomGroup>
        <ZoomButton aria-label="Zoom out">−</ZoomButton>
        <ZoomRange type="range" min="0" max="100" defaultValue="57" aria-label="Zoom" />
        <ZoomButton aria-label="Zoom in">+</ZoomButton>
        <output>151%</output>
      </ZoomGroup>
    </WordBar>
  </Behind>
);

export default function App() {
  return (
    <Desktop>
      <GlobalStyle />
      <Windows>
        <LoadMonitor />
        <RightSide />
      </Windows>
    </Desktop>
  );
}
